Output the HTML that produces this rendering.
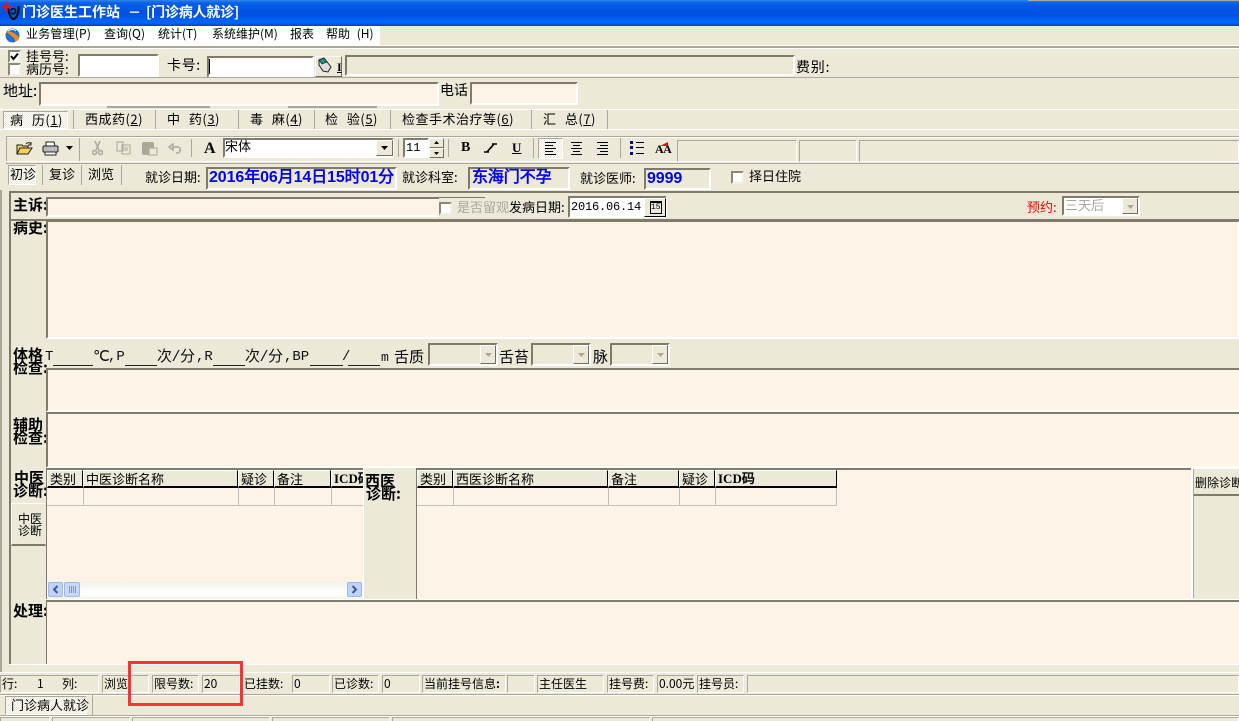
<!DOCTYPE html>
<html lang="zh"><head><meta charset="utf-8"><title>门诊医生工作站</title>
<style>
html,body{margin:0;padding:0;background:#ece9d8;}
#r{position:relative;width:1239px;height:721px;overflow:hidden;background:#ece9d8;color:#000;font:12px/14px "WenQuanYi Zen Hei","Noto Sans CJK SC","Liberation Sans",sans-serif;}
#r div,#r span,#r svg{position:absolute;box-sizing:border-box;}
#r span span{position:static;}
.t{white-space:nowrap;}
.f13{font-size:13px;}.f14{font-size:14px;}.f15{font-size:15px;}
.tab{font-size:13px;letter-spacing:.5px;word-spacing:5px;}
.h{font-weight:bold;font-size:15px;line-height:14px;}
.blue{color:#0000f0;font-weight:bold;font-size:16px;line-height:18px;font-family:"Liberation Sans","WenQuanYi Zen Hei",sans-serif;letter-spacing:-.1px;}
.s{border:2px solid;border-color:#7f7b6b #fff #fff #7f7b6b;}
.s1{border:1px solid;border-color:#aca899 #fff #fff #aca899;}
.p{background:#fff3e8;}.w{background:#fff;}
.l{background:#aca899;}.wh{background:#fff;}.dk{background:#7f7b6b;}.k{background:#222;height:1px;top:365px;}
.cb{width:13px;height:13px;background:#fff;border:2px solid;border-color:#8c8873 #f1efe2 #f1efe2 #8c8873;}
.sel{background-image:conic-gradient(#fff 25%,#ece9d8 0 50%,#fff 0 75%,#ece9d8 0);background-size:2px 2px;border:1px solid;border-color:#aca899 #fff #fff #aca899;}
.btn{background:#ece9d8;border:1px solid;border-color:#fff #716f64 #716f64 #fff;}
.hc{background:#ece9d8;border-left:1px solid #fff;border-top:1px solid #fff;border-right:1px solid #000;border-bottom:2px solid #000;height:18px;top:470px;padding-left:2px;line-height:15px;white-space:nowrap;overflow:hidden;font-size:13px;}
.gv{width:1px;background:#c0c0c0;top:488px;height:18px;}
.u{text-decoration:underline;}
.v{font:14px/15px "Liberation Mono","WenQuanYi Zen Hei",monospace;top:350px;color:#111;}
</style></head><body><div id="r">

<!-- title bar -->
<div style="left:0;top:0;width:1239px;height:26px;background:linear-gradient(#2f86f0 0,#0a5fe6 3px,#0055e3 10px,#0050de 14px,#0060f5 20px,#0066ff 23px,#0048c8 25px)"></div>
<div style="left:1028px;top:0;width:211px;height:1px;background:#a8a8a8"></div>
<svg style="left:1px;top:1px" width="20" height="22" viewBox="0 0 20 22"><path d="M7 7C8 13 10 18 12.500 18C15.500 18 18 12 17.500 5" fill="none" stroke="#111" stroke-width="2.200"/><path d="M9.500 9.500c2-3 5.500-2 5 1c-.5 2.500-3.500 3-4 1" fill="none" stroke="#111" stroke-width="1.500"/><path d="M1 6h9M5.500 1.500v9" stroke="#f01010" stroke-width="2.500"/></svg>
<span class="t" style="left:22px;top:5px;color:#fff;font-weight:bold;font-size:14px">门诊医生工作站</span>
<span class="t" style="left:128px;top:5px;color:#fff;font-weight:bold;font-size:13px">－</span>
<span class="t" style="left:146px;top:5px;color:#fff;font-weight:bold;font-size:14px;letter-spacing:-.2px">[门诊病人就诊]</span>

<!-- menu -->
<div class="w" style="left:0;top:26px;width:380px;height:19px"></div>
<svg style="left:5px;top:27px" width="15" height="17" viewBox="0 0 15 17"><circle cx="7.500" cy="8.500" r="7" fill="#1e6fd0"/><path d="M1 5c4-2 9 1 13 5c-1 3-2 4-4 5c1-4-5-7-9-10z" fill="#f08a1c"/><path d="M3 4c3-2 6-2 8 0" stroke="#fff" fill="none"/></svg>
<span class="t" style="left:26px;top:27px;letter-spacing:.2px">业务管理(P)</span>
<span class="t" style="left:104px;top:27px">查询(Q)</span>
<span class="t" style="left:158px;top:27px">统计(T)</span>
<span class="t" style="left:212px;top:27px">系统维护(M)</span>
<span class="t" style="left:290px;top:27px">报表</span>
<span class="t" style="left:326px;top:27px;word-spacing:4px">帮助 (H)</span>
<div class="wh" style="left:0;top:45px;width:1239px;height:1px"></div>
<div class="l" style="left:0;top:46px;width:1239px;height:2px"></div>
<div class="wh" style="left:0;top:48px;width:1239px;height:1px"></div>

<!-- row 1 -->
<div class="cb" style="left:8px;top:50px"></div>
<svg style="left:10px;top:52px" width="9" height="9"><path d="M1 4l2.500 3L8 1.500" fill="none" stroke="#000" stroke-width="2"/></svg>
<div class="cb" style="left:8px;top:63px"></div>
<span class="t f13" style="left:26px;top:49px">挂号号:</span>
<span class="t f13" style="left:26px;top:62px">病历号:</span>
<div class="s w" style="left:78px;top:54px;width:81px;height:23px"></div>
<span class="t f14" style="left:167px;top:58px;letter-spacing:.6px">卡号:</span>
<div class="s w" style="left:207px;top:56px;width:107px;height:22px"></div>
<div style="left:209px;top:59px;width:1px;height:15px;background:#000"></div>
<div class="btn" style="left:315px;top:56px;width:27px;height:21px"></div>
<svg style="left:317px;top:57px" width="16" height="18" viewBox="0 0 16 18"><path d="M2 3l5-2 7 9-3 5-5-1-4-6z" fill="#ddd" stroke="#222"/><path d="M2 3l5-2 3 4-5 2z" fill="#0a9a84" stroke="#222" stroke-width=".7"/></svg>
<span class="t" style="left:337px;top:60px;font:bold 12px/14px 'Liberation Serif',serif;text-decoration:underline">I</span>
<div class="s" style="left:345px;top:55px;width:450px;height:21px"></div>
<span class="t f14" style="left:796px;top:60px;letter-spacing:.8px">费别:</span>
<div class="l" style="left:0;top:77px;width:1239px;height:1px"></div>

<!-- row 2 -->
<span class="t f15" style="left:3px;top:84px">地址:</span>
<div class="s p" style="left:39px;top:82px;width:400px;height:24px"></div>
<span class="t f14" style="left:440px;top:83px">电话</span>
<div class="s p" style="left:470px;top:82px;width:108px;height:23px"></div>
<div class="l" style="left:107px;top:106px;width:103px;height:2px"></div>
<div class="l" style="left:288px;top:106px;width:89px;height:2px"></div>
<div class="wh" style="left:0;top:109px;width:1239px;height:1px"></div>

<!-- tabs -->
<div class="sel" style="left:3px;top:111px;width:65px;height:18px"></div>
<span class="t tab" style="left:10px;top:113px">病 历(<span class="u">1</span>)</span>
<span class="t tab" style="left:85px;top:112px">西成药(<span class="u">2</span>)</span>
<span class="t tab" style="left:167px;top:112px">中 药(<span class="u">3</span>)</span>
<span class="t tab" style="left:250px;top:112px">毒 麻(<span class="u">4</span>)</span>
<span class="t tab" style="left:325px;top:112px">检 验(<span class="u">5</span>)</span>
<span class="t tab" style="left:402px;top:112px">检查手术治疗等(<span class="u">6</span>)</span>
<span class="t tab" style="left:543px;top:112px">汇 总(<span class="u">7</span>)</span>
<div class="l" style="left:73px;top:110px;width:1px;height:19px"></div>
<div class="l" style="left:155px;top:110px;width:1px;height:19px"></div>
<div class="l" style="left:238px;top:110px;width:1px;height:19px"></div>
<div class="l" style="left:314px;top:110px;width:1px;height:19px"></div>
<div class="l" style="left:390px;top:110px;width:1px;height:19px"></div>
<div class="l" style="left:531px;top:110px;width:1px;height:19px"></div>
<div class="l" style="left:607px;top:110px;width:1px;height:19px"></div>
<div class="wh" style="left:0;top:129px;width:1239px;height:1px"></div>

<!-- toolbar -->
<div class="l" style="left:6px;top:136px;width:1233px;height:1px"></div>
<div class="wh" style="left:6px;top:137px;width:1233px;height:1px"></div>
<div class="l" style="left:6px;top:136px;width:1px;height:28px"></div>
<div class="wh" style="left:6px;top:161px;width:1233px;height:1px"></div>
<div class="l" style="left:6px;top:163px;width:1233px;height:1px"></div>

<svg style="left:16px;top:141px" width="17" height="15" viewBox="0 0 17 15"><path d="M1 13V4h5l1 1h5v2H4L1 13h11l4-6H4" fill="#f5d25a" stroke="#222"/><path d="M10 3c2-2 3-2 5 0M15 1v3h-3" stroke="#222" fill="none"/></svg>
<svg style="left:42px;top:141px" width="17" height="15" viewBox="0 0 17 15"><path d="M4 1h8l1 4H4z" fill="#fff" stroke="#222"/><rect x="1" y="5" width="15" height="6" rx="1" fill="#bbb" stroke="#222"/><path d="M3 11h11v3H3z" fill="#fff" stroke="#222"/></svg>
<svg style="left:66px;top:146px" width="7" height="4"><path d="M0 0h7L3.500 4z" fill="#000"/></svg>
<div class="l" style="left:79px;top:138px;width:1px;height:23px"></div>
<svg style="left:92px;top:140px" width="11" height="16" viewBox="0 0 11 16" fill="none" stroke="#aca899" stroke-width="1.500"><path d="M3 1l4 9M8 1L4 10"/><circle cx="2.500" cy="12.500" r="2"/><circle cx="8.500" cy="12.500" r="2"/></svg>
<svg style="left:116px;top:141px" width="15" height="14" viewBox="0 0 15 14" fill="#ece9d8" stroke="#aca899"><path d="M1 1h6v9H1zM6 4h8v9H6z"/><path d="M8 7h4M8 9h4"/></svg>
<svg style="left:141px;top:141px" width="17" height="15" viewBox="0 0 17 15"><rect x="1" y="1" width="12" height="13" rx="2" fill="#aca899"/><rect x="8" y="7" width="8" height="7" fill="#ece9d8" stroke="#aca899"/></svg>
<svg style="left:168px;top:143px" width="14" height="11" viewBox="0 0 14 11" fill="none" stroke="#aca899" stroke-width="1.500"><path d="M1 4l4-3v6zM5 4h5c3 0 3 5 0 6H8"/></svg>
<div class="l" style="left:191px;top:139px;width:1px;height:18px"></div>
<span class="t" style="left:204px;top:141px;font:bold 16px/16px 'Liberation Serif',serif">A</span>
<div class="s w" style="left:223px;top:138px;width:171px;height:20px"></div>
<span class="t f13" style="left:225px;top:139px">宋体</span>
<div class="btn" style="left:376px;top:140px;width:17px;height:16px"></div>
<svg style="left:381px;top:146px" width="7" height="4"><path d="M0 0h7L3.500 4z" fill="#000"/></svg>
<div class="l" style="left:398px;top:139px;width:1px;height:18px"></div>
<div class="s w" style="left:403px;top:138px;width:26px;height:20px"></div>
<span class="t" style="left:406px;top:141px;font-family:'Liberation Mono',monospace">11</span>
<div class="btn" style="left:429px;top:138px;width:15px;height:10px"></div>
<div class="btn" style="left:429px;top:148px;width:15px;height:10px"></div>
<svg style="left:434px;top:141px" width="5" height="3"><path d="M0 3h5L2.500 0z"/></svg>
<svg style="left:434px;top:152px" width="5" height="3"><path d="M0 0h5L2.500 3z"/></svg>
<div class="l" style="left:448px;top:139px;width:1px;height:18px"></div>
<span class="t" style="left:461px;top:141px;font:bold 14px/14px 'Liberation Serif',serif">B</span>
<svg style="left:484px;top:143px" width="13" height="10"><path d="M0 9h5M8 1h5M3 9L10 1" stroke="#000" stroke-width="1.500" fill="none"/><path d="M2 9L9 1h2L4 9z"/></svg>
<span class="t" style="left:512px;top:141px;font:bold 13px/14px 'Liberation Serif',serif;text-decoration:underline">U</span>
<div class="l" style="left:533px;top:138px;width:1px;height:20px"></div>
<div class="sel" style="left:538px;top:138px;width:25px;height:21px"></div>
<svg style="left:545px;top:142px" width="66" height="13" fill="none" stroke="#000"><path d="M0 .5h11M0 3.500h8M0 6.500h11M0 9.500h8M0 12.500h11"/><path d="M26 .5h11M28 3.500h7M26 6.500h11M28 9.500h7M26 12.500h11"/><path d="M52 .5h11M55 3.500h8M52 6.500h11M55 9.500h8M52 12.500h11"/></svg>
<div class="l" style="left:620px;top:138px;width:1px;height:20px"></div>
<svg style="left:630px;top:141px" width="14" height="14"><path d="M0 0h3v3H0zM0 5h3v3H0zM0 11h3v3H0z" fill="#00008c"/><path d="M6 1.500h8M6 6.500h8M6 12.500h8" stroke="#000"/></svg>
<span class="t" style="left:655px;top:143px;font:bold 12px/13px 'Liberation Serif',serif;letter-spacing:-.5px">AA</span>
<svg style="left:660px;top:142px" width="8" height="4"><path d="M0 4l8-4v4z" fill="#e01010"/></svg>
<div class="s1" style="left:677px;top:140px;width:120px;height:22px"></div>
<div class="s1" style="left:799px;top:140px;width:58px;height:22px"></div>
<div class="s1" style="left:859px;top:140px;width:380px;height:22px"></div>

<!-- sub tabs -->
<div class="sel" style="left:8px;top:165px;width:28px;height:20px"></div>
<span class="t f13" style="left:10px;top:167px">初诊</span>
<span class="t f13" style="left:49px;top:167px">复诊</span>
<span class="t f13" style="left:88px;top:167px">浏览</span>
<div class="l" style="left:42px;top:165px;width:1px;height:20px"></div>
<div class="l" style="left:81px;top:165px;width:1px;height:20px"></div>
<div class="l" style="left:121px;top:165px;width:1px;height:20px"></div>
<span class="t f13" style="left:145px;top:170px">就诊日期:</span>
<div class="s" style="left:206px;top:167px;width:191px;height:23px"></div>
<span class="t blue" style="left:209px;top:169px">2016年06月14日15时01分</span>
<span class="t f13" style="left:402px;top:170px">就诊科室:</span>
<div class="s" style="left:468px;top:167px;width:102px;height:23px"></div>
<span class="t blue" style="left:472px;top:169px">东海门不孕</span>
<span class="t f13" style="left:580px;top:171px">就诊医师:</span>
<div class="s" style="left:644px;top:168px;width:67px;height:22px"></div>
<span class="t blue" style="left:647px;top:170px">9999</span>
<div class="cb" style="left:731px;top:171px"></div>
<span class="t f13" style="left:749px;top:169px">择日住院</span>

<!-- main panel frame -->
<div class="dk" style="left:9px;top:191px;width:1230px;height:2px"></div>
<div class="dk" style="left:9px;top:191px;width:2px;height:473px"></div>
<div class="l" style="left:0;top:190px;width:2px;height:482px"></div>
<div class="wh" style="left:9px;top:664px;width:1230px;height:1px"></div>

<!-- 主诉 -->
<span class="t h" style="left:13px;top:198px">主诉:</span>
<div class="s p" style="left:46px;top:197px;width:393px;height:20px;border-right:0"></div>
<div class="dk" style="left:439px;top:197px;width:46px;height:1px"></div>
<div class="cb" style="left:439px;top:202px"></div>
<span class="t f13" style="left:457px;top:200px;color:#aca899">是否留观</span>
<span class="t f13" style="left:509px;top:200px">发病日期:</span>
<div class="s w" style="left:568px;top:196px;width:99px;height:22px"></div>
<span class="t" style="left:571px;top:200px;font-family:'Liberation Mono',monospace;font-size:12px;letter-spacing:-.2px">2016.06.14</span>
<div class="btn" style="left:644px;top:198px;width:22px;height:19px;border-right-color:#000;border-bottom-color:#000"></div>
<div style="left:650px;top:201px;width:12px;height:13px;border:1px solid #000;border-top-width:2px;background:#ece9d8"></div>
<span class="t" style="left:651px;top:203px;font:8px/9px 'Liberation Mono',monospace">15</span>
<span class="t f13" style="left:1027px;top:200px;color:#f00">预约:</span>
<div class="s w" style="left:1062px;top:196px;width:78px;height:20px"></div>
<span class="t f13" style="left:1065px;top:198px;color:#aca899">三天后</span>
<div class="btn" style="left:1122px;top:198px;width:16px;height:16px"></div>
<svg style="left:1127px;top:205px" width="7" height="4"><path d="M0 0h7L3.500 4z" fill="#aca899"/></svg>

<!-- 病史 -->
<span class="t h" style="left:13px;top:221px">病史:</span>
<div class="dk" style="left:11px;top:219px;width:1228px;height:2px"></div>
<div class="s p" style="left:46px;top:220px;width:1194px;height:119px"></div>

<!-- 体格 -->
<span class="t h" style="left:13px;top:348px">体格</span>
<span class="t h" style="left:13px;top:361px">检查:</span>
<span class="t v" style="left:45px">T</span>
<div class="k" style="left:53px;width:40px"></div>
<span class="t v" style="left:93px;font-size:15px">℃</span>
<span class="t v" style="left:108px">,P</span>
<div class="k" style="left:125px;width:32px"></div>
<span class="t v" style="left:157px;font-size:15px;letter-spacing:-.5px">次/分</span>
<span class="t v" style="left:196px">,R</span>
<div class="k" style="left:213px;width:32px"></div>
<span class="t v" style="left:245px;font-size:15px;letter-spacing:-.5px">次/分</span>
<span class="t v" style="left:284px">,BP</span>
<div class="k" style="left:310px;width:33px"></div>
<span class="t v" style="left:342px">/</span>
<div class="k" style="left:348px;width:32px"></div>
<span class="t v" style="left:381px;font-size:13px;letter-spacing:-1px">m</span>
<span class="t f15" style="left:394px;top:350px">舌质</span>
<div class="s" style="left:428px;top:343px;width:70px;height:23px"></div>
<div class="btn" style="left:480px;top:345px;width:16px;height:19px"></div>
<svg style="left:485px;top:353px" width="7" height="4"><path d="M0 0h7L3.500 4z" fill="#aca899"/></svg>
<span class="t f15" style="left:499px;top:350px">舌苔</span>
<div class="s" style="left:531px;top:343px;width:60px;height:23px"></div>
<div class="btn" style="left:573px;top:345px;width:16px;height:19px"></div>
<svg style="left:578px;top:353px" width="7" height="4"><path d="M0 0h7L3.500 4z" fill="#aca899"/></svg>
<span class="t f15" style="left:593px;top:350px">脉</span>
<div class="s" style="left:610px;top:343px;width:60px;height:23px"></div>
<div class="btn" style="left:652px;top:345px;width:16px;height:19px"></div>
<svg style="left:657px;top:353px" width="7" height="4"><path d="M0 0h7L3.500 4z" fill="#aca899"/></svg>

<div class="s p" style="left:46px;top:368px;width:1195px;height:44px"></div>
<span class="t h" style="left:13px;top:418px">辅助</span>
<span class="t h" style="left:13px;top:431px">检查:</span>
<div class="s p" style="left:46px;top:412px;width:1195px;height:56px"></div>

<!-- 中医 table -->
<span class="t h" style="left:14px;top:471px">中医</span>
<span class="t h" style="left:13px;top:484px">诊断:</span>
<div class="btn" style="left:11px;top:503px;width:35px;height:43px;border-color:#fff #ece9d8 #7f7b6b #fff;border-bottom-width:2px"></div>
<span class="t" style="left:18px;top:513px;line-height:12px;font-size:12px">中医<br>诊断</span>
<div class="dk" style="left:46px;top:468px;width:318px;height:2px"></div>
<div class="p" style="left:46px;top:470px;width:318px;height:111px"></div>
<div class="dk" style="left:46px;top:468px;width:1px;height:132px"></div>
<div class="hc" style="left:47px;width:36px">类别</div>
<div class="hc" style="left:83px;width:155px">中医诊断名称</div>
<div class="hc" style="left:238px;width:36px">疑诊</div>
<div class="hc" style="left:274px;width:57px">备注</div>
<div class="hc" style="left:331px;width:33px;border-right:0;font-weight:bold;font-family:'Liberation Serif','WenQuanYi Zen Hei',serif">ICD码</div>
<div class="gv" style="left:83px"></div><div class="gv" style="left:238px"></div><div class="gv" style="left:274px"></div><div class="gv" style="left:331px"></div>
<div style="left:47px;top:505px;width:316px;height:1px;background:#c0c0c0"></div>
<div style="left:47px;top:581px;width:317px;height:18px;background:linear-gradient(#f3f1e8,#fff 70%,#f5f4ea)"></div>
<div style="left:48px;top:582px;width:15px;height:15px;background:#c0d3f8;border:1px solid #9db8ee;border-radius:2px"></div>
<svg style="left:52px;top:585px" width="7" height="9" fill="none" stroke="#44598f" stroke-width="2"><path d="M5.500 1l-3.500 3.500 3.500 3.500"/></svg>
<div style="left:64px;top:582px;width:16px;height:15px;background:#c9d9fa;border:1px solid #9db8ee;border-radius:2px"></div>
<svg style="left:69px;top:586px" width="7" height="7" stroke="#7f94c8"><path d="M.5 0v7M2.500 0v7M4.500 0v7M6.500 0v7"/></svg>
<div style="left:347px;top:582px;width:15px;height:15px;background:#c0d3f8;border:1px solid #9db8ee;border-radius:2px"></div>
<svg style="left:351px;top:585px" width="7" height="9" fill="none" stroke="#44598f" stroke-width="2"><path d="M1.500 1l3.500 3.500-3.500 3.500"/></svg>
<div class="wh" style="left:363px;top:467px;width:1px;height:133px"></div>

<!-- 西医 -->
<div class="wh" style="left:364px;top:467px;width:52px;height:1px"></div>
<span class="t h" style="left:365px;top:474px">西医</span>
<span class="t h" style="left:366px;top:487px">诊断:</span>
<div class="dk" style="left:416px;top:468px;width:775px;height:2px"></div>
<div class="dk" style="left:416px;top:468px;width:1px;height:132px"></div>
<div class="p" style="left:417px;top:470px;width:774px;height:129px"></div>
<div class="hc" style="left:417px;width:36px">类别</div>
<div class="hc" style="left:453px;width:155px">西医诊断名称</div>
<div class="hc" style="left:608px;width:71px">备注</div>
<div class="hc" style="left:679px;width:36px">疑诊</div>
<div class="hc" style="left:715px;width:122px;font-weight:bold;font-family:'Liberation Serif','WenQuanYi Zen Hei',serif">ICD码</div>
<div class="gv" style="left:453px"></div><div class="gv" style="left:608px"></div><div class="gv" style="left:679px"></div><div class="gv" style="left:715px"></div><div class="gv" style="left:836px"></div>
<div style="left:417px;top:505px;width:420px;height:1px;background:#c0c0c0"></div>
<div class="wh" style="left:1191px;top:467px;width:2px;height:133px"></div>
<div class="wh" style="left:1191px;top:467px;width:48px;height:2px"></div>
<div class="l" style="left:1193px;top:469px;width:1px;height:129px"></div>
<div class="dk" style="left:1194px;top:494px;width:45px;height:2px"></div>
<span class="t" style="left:1195px;top:476px">删除诊断</span>

<!-- 处理 -->
<span class="t h" style="left:13px;top:604px">处理:</span>
<div class="dk" style="left:46px;top:600px;width:1193px;height:2px"></div>
<div class="p" style="left:46px;top:602px;width:1193px;height:62px"></div>
<div class="dk" style="left:46px;top:600px;width:1px;height:64px"></div>
<div class="wh" style="left:46px;top:599px;width:1193px;height:1px"></div>

<!-- status -->
<div class="wh" style="left:0;top:672px;width:1239px;height:1px"></div>
<div class="s1" style="left:0;top:675px;width:99px;height:18px"></div>
<div class="s1" style="left:102px;top:675px;width:47px;height:18px"></div>
<div class="s1" style="left:152px;top:675px;width:47px;height:18px"></div>
<div class="s1" style="left:202px;top:675px;width:38px;height:18px"></div>
<div class="s1" style="left:292px;top:675px;width:38px;height:18px"></div>
<div class="s1" style="left:332px;top:675px;width:47px;height:18px"></div>
<div class="s1" style="left:382px;top:675px;width:38px;height:18px"></div>
<div class="s1" style="left:422px;top:675px;width:84px;height:18px"></div>
<div class="s1" style="left:507px;top:675px;width:28px;height:18px"></div>
<div class="s1" style="left:537px;top:675px;width:67px;height:18px"></div>
<div class="s1" style="left:607px;top:675px;width:47px;height:18px"></div>
<div class="s1" style="left:657px;top:675px;width:38px;height:18px"></div>
<div class="s1" style="left:697px;top:675px;width:47px;height:18px"></div>
<div class="s1" style="left:747px;top:675px;width:492px;height:18px"></div>
<span class="t" style="left:2px;top:677px">行:</span>
<span class="t" style="left:37px;top:677px">1</span>
<span class="t" style="left:62px;top:677px">列:</span>
<span class="t" style="left:104px;top:677px">浏览</span>
<span class="t" style="left:154px;top:677px">限号数:</span>
<span class="t" style="left:204px;top:677px">20</span>
<span class="t" style="left:244px;top:677px">已挂数:</span>
<span class="t" style="left:294px;top:677px">0</span>
<span class="t" style="left:334px;top:677px">已诊数:</span>
<span class="t" style="left:384px;top:677px">0</span>
<span class="t" style="left:424px;top:677px">当前挂号信息<b style="font-weight:bold">:</b></span>
<span class="t" style="left:539px;top:677px">主任医生</span>
<span class="t" style="left:609px;top:677px">挂号费:</span>
<span class="t" style="left:659px;top:677px">0.00元</span>
<span class="t" style="left:699px;top:677px">挂号员:</span>
<div class="l" style="left:0;top:694px;width:1239px;height:1px"></div>
<div class="wh" style="left:0;top:695px;width:1239px;height:1px"></div>

<!-- bottom tab -->
<div class="sel" style="left:5px;top:696px;width:82px;height:19px"></div>
<span class="t f13" style="left:11px;top:698px">门诊病人就诊</span>
<div class="l" style="left:92px;top:695px;width:1px;height:20px"></div>
<div class="l" style="left:0;top:715px;width:1239px;height:1px"></div>
<div class="wh" style="left:0;top:716px;width:1239px;height:1px"></div>
<div class="s1" style="left:0;top:717px;width:50px;height:8px"></div>
<div class="s1" style="left:52px;top:717px;width:78px;height:8px"></div>
<div class="s1" style="left:132px;top:717px;width:138px;height:8px"></div>
<div class="s1" style="left:272px;top:717px;width:118px;height:8px"></div>
<div class="s1" style="left:392px;top:717px;width:258px;height:8px"></div>
<div class="s1" style="left:652px;top:717px;width:587px;height:8px"></div>

<!-- red annotation -->
<div style="left:128px;top:661px;width:115px;height:45px;border:3px solid #f33"></div>

</div></body></html>
